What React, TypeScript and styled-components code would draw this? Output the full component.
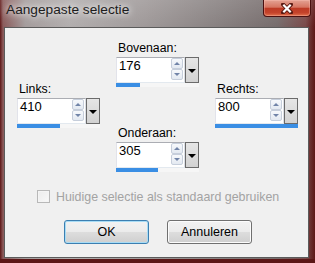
import React from "react";
import styled, { createGlobalStyle } from "styled-components";

const Global = createGlobalStyle`
  html, body { margin: 0; padding: 0; background: #ffffff; }
  body { font-family: "Liberation Sans", Arial, sans-serif; }
  * { box-sizing: border-box; }
`;

const Window = styled.div`
  width: 315px;
  height: 263px;
  display: flex;
  flex-direction: column;
  background:
    linear-gradient(to bottom, rgba(255,255,255,0.12) 0px, rgba(255,255,255,0) 27px),
    linear-gradient(to right, #5e1616 0px, #8a5a5a 3px, #a49c9c 8%, #b2aeae 22%, #a09a9a 45%, #878080 70%, #766c6c 88%, #7a4a4a 97%, #5e1616 100%);
  border-bottom: 4px solid #5c1616;
`;

const TitleBar = styled.div`
  height: 27px;
  flex: none;
  display: flex;
  align-items: flex-start;
  justify-content: space-between;
  padding-left: 6px;
  padding-right: 4px;
`;

const Title = styled.div`
  font-size: 13.7px;
  line-height: 16px;
  margin-top: 2px;
  color: #1c1c1c;
  text-shadow: 0 0 6px rgba(255,255,255,0.9), 0 0 10px rgba(255,255,255,0.7);
  white-space: nowrap;
`;

const CloseButton = styled.div`
  width: 48px;
  height: 17px;
  border: 1px solid #4a1010;
  border-top: none;
  border-radius: 0 0 4px 4px;
  background: linear-gradient(to bottom, #e4a293 0%, #d67561 45%, #bd3a24 52%, #c4432b 80%, #e2724e 100%);
  display: flex;
  align-items: center;
  justify-content: center;
  box-shadow: inset 0 0 0 1px rgba(255,200,190,0.35);
`;

const Client = styled.div`
  flex: 1;
  margin: 0 6px 1px 4px;
  background: #f0f0f0;
  border: 1px solid #5b5b5b;
  display: flex;
  flex-direction: column;
`;

const Fields = styled.div`
  display: flex;
  align-items: center;
  gap: 16px;
  padding: 13px 0 0 12px;
`;

const SideColumn = styled.div`
  display: flex;
  flex-direction: column;
  padding-bottom: 3px;
`;

const MiddleColumn = styled.div`
  display: flex;
  flex-direction: column;
  gap: 39px;
`;

const Group = styled.div`
  display: flex;
  flex-direction: column;
  gap: 2px;
  width: 83px;
`;

const Label = styled.div`
  font-size: 12.3px;
  line-height: 14px;
  color: #000;
  padding-left: 2px;
  white-space: nowrap;
`;

const Widget = styled.div`
  display: flex;
  flex-direction: column;
  width: 83px;
`;

const TopRow = styled.div`
  display: flex;
  height: 26px;
`;

const InputBox = styled.div`
  flex: 1;
  background: #ffffff;
  border: 1px solid;
  border-color: #abadb3 #dbdfe6 #e3e9ef #e2e3ea;
  display: flex;
  align-items: flex-start;
  justify-content: space-between;
  padding-left: 2px;
`;

const Value = styled.div`
  font-size: 13px;
  line-height: 15px;
  color: #000;
`;

const Spinner = styled.div`
  display: flex;
  flex-direction: column;
  width: 12px;
  margin-right: 1px;
`;

const SpinButton = styled.div<{ $up?: boolean }>`
  height: 11px;
  border: 1px solid #c6cedb;
  border-radius: 2px;
  background: linear-gradient(to bottom, #f7f9fc, #e3e9f1);
  display: flex;
  align-items: center;
  justify-content: center;
  &::after {
    content: "";
    width: 0;
    height: 0;
    border-left: 3px solid transparent;
    border-right: 3px solid transparent;
    ${(p) => (p.$up ? "border-bottom: 3px solid #7184a8;" : "border-top: 3px solid #7184a8;")}
  }
`;

const DropButton = styled.div`
  width: 14px;
  flex: none;
  border: 1px solid #6b6b6b;
  background: linear-gradient(to bottom, #e6e6e6, #d2d2d2);
  display: flex;
  align-items: center;
  justify-content: center;
  &::after {
    content: "";
    width: 0;
    height: 0;
    margin-top: 2px;
    border-left: 4px solid transparent;
    border-right: 4px solid transparent;
    border-top: 4px solid #000;
  }
`;

const Bar = styled.div`
  height: 4px;
  background: #f6f6f6;
  display: flex;
`;

const BarFill = styled.div`
  height: 100%;
  background: #3a8ee4;
`;

const CheckRow = styled.div`
  display: flex;
  align-items: center;
  gap: 6px;
  margin-top: 18px;
  padding-left: 32px;
  height: 13px;
`;

const CheckBox = styled.div`
  width: 13px;
  height: 13px;
  border: 1px solid #b8b8b8;
  background: linear-gradient(to bottom right, #ececec, #f8f8f8);
  box-shadow: inset 0 0 0 1px #f4f4f4;
`;

const CheckLabel = styled.div`
  font-size: 12.4px;
  line-height: 14px;
  color: #a3a3a3;
  white-space: nowrap;
`;

const ButtonRow = styled.div`
  display: flex;
  gap: 18px;
  margin-top: 17px;
  padding-left: 59px;
`;

const Button = styled.div<{ $default?: boolean }>`
  width: 85px;
  height: 24px;
  border: 1px solid ${(p) => (p.$default ? "#3c7fb1" : "#707070")};
  border-radius: 3px;
  background: linear-gradient(to bottom, #f2f2f2 0%, #ebebeb 50%, #dddddd 51%, #cfcfcf 100%);
  box-shadow: inset 0 0 0 1px ${(p) => (p.$default ? "#a8dcf5" : "#fcfcfc")};
  display: flex;
  align-items: center;
  justify-content: center;
  font-size: 12.5px;
  color: #000;
`;

type FieldProps = { label: string; value: number; max: number };

const Field = ({ label, value, max }: FieldProps) => (
  <Group>
    <Label>{label}</Label>
    <Widget>
      <TopRow>
        <InputBox>
          <Value>{value}</Value>
          <Spinner>
            <SpinButton $up />
            <SpinButton />
          </Spinner>
        </InputBox>
        <DropButton />
      </TopRow>
      <Bar>
        <BarFill style={{ width: `${(value / max) * 100}%` }} />
      </Bar>
    </Widget>
  </Group>
);

export default function App() {
  return (
    <>
      <Global />
      <Window>
        <TitleBar>
          <Title>Aangepaste selectie</Title>
          <CloseButton>
            <svg width="12" height="11" viewBox="0 0 12 11">
              <path d="M2 1.5 L10 9.5 M10 1.5 L2 9.5" stroke="#5a1a12" strokeWidth="4" strokeLinecap="square" />
              <path d="M2.3 1.8 L9.7 9.2 M9.7 1.8 L2.3 9.2" stroke="#ffffff" strokeWidth="2.2" />
            </svg>
          </CloseButton>
        </TitleBar>
        <Client>
          <Fields>
            <SideColumn>
              <Field label="Links:" value={410} max={800} />
            </SideColumn>
            <MiddleColumn>
              <Field label="Bovenaan:" value={176} max={600} />
              <Field label="Onderaan:" value={305} max={600} />
            </MiddleColumn>
            <SideColumn>
              <Field label="Rechts:" value={800} max={800} />
            </SideColumn>
          </Fields>
          <CheckRow>
            <CheckBox />
            <CheckLabel>Huidige selectie als standaard gebruiken</CheckLabel>
          </CheckRow>
          <ButtonRow>
            <Button $default>OK</Button>
            <Button>Annuleren</Button>
          </ButtonRow>
        </Client>
      </Window>
    </>
  );
}
